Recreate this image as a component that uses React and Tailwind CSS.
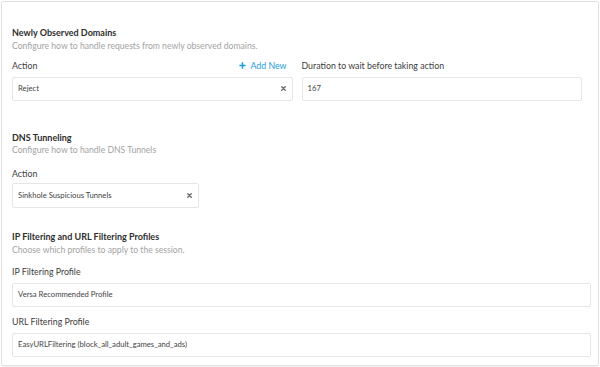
import React from "react";

const font = { fontFamily: "Lato, 'Open Sans', sans-serif" };

function XIcon() {
  return (
    <svg width="5" height="5" viewBox="0 0 10 10" className="shrink-0">
      <path d="M1.5 1.5 L8.5 8.5 M8.5 1.5 L1.5 8.5" stroke="#666" strokeWidth="2.6" strokeLinecap="round" />
    </svg>
  );
}

function Field({ value, clear, className = "" }) {
  return (
    <div className={`h-[24px] flex items-center justify-between border border-[#e6e6e6] rounded-[2px] bg-white pl-[5px] pr-[6px] ${className}`}>
      <span className="text-[7.7px] text-[#444] leading-none">{value}</span>
      {clear && <XIcon />}
    </div>
  );
}

function Title({ children }) {
  return <div className="text-[9px] leading-[12px] font-bold text-[#2e2e2e]">{children}</div>;
}
function Sub({ children }) {
  return <div className="text-[8.65px] leading-[12px] text-[#a3a3a3] mt-[0.5px]">{children}</div>;
}
function Label({ children, className = "" }) {
  return <div className={`text-[8.8px] leading-[12px] text-[#3c3c3c] ${className}`}>{children}</div>;
}

export default function App() {
  return (
    <div className="w-[600px] h-[367px] bg-white" style={font}>
      <div className="ml-px mt-px w-[598px] h-[365px] border border-[#e2e2e2] rounded-[2px] shadow-[0_1px_1px_rgba(0,0,0,0.06)] pl-[10px] pr-[7px] pt-[25px]">
        {/* Section 1 */}
        <Title>Newly Observed Domains</Title>
        <Sub>Configure how to handle requests from newly observed domains.</Sub>
        <div className="grid grid-cols-2 mt-[8px]">
          <div className="pr-[9px]">
            <div className="flex items-center justify-between">
              <Label>Action</Label>
              <div className="flex items-center gap-[4px] mr-[6px] text-[8.8px] leading-[12px] text-[#1d9ce0]">
                <svg width="7" height="7" viewBox="0 0 10 10">
                  <path d="M5 0.5 V9.5 M0.5 5 H9.5" stroke="#1d9ce0" strokeWidth="2.2" />
                </svg>
                <span>Add New</span>
              </div>
            </div>
            <Field value="Reject" clear className="mt-[5px]" />
          </div>
          <div className="pr-[9px]">
            <Label>Duration to wait before taking action</Label>
            <Field value="167" className="mt-[5px]" />
          </div>
        </div>

        {/* Section 2 */}
        <div className="mt-[31px]">
          <Title>DNS Tunneling</Title>
          <Sub>Configure how to handle DNS Tunnels</Sub>
          <Label className="mt-[12px]">Action</Label>
          <Field value="Sinkhole Suspicious Tunnels" clear className="mt-[3px] w-[187px] h-[25px]" />
        </div>

        {/* Section 3 */}
        <div className="mt-[23px]">
          <Title>IP Filtering and URL Filtering Profiles</Title>
          <Sub>Choose which profiles to apply to the session.</Sub>
          <Label className="mt-[10px]">IP Filtering Profile</Label>
          <Field value="Versa Recommended Profile" className="mt-[5px]" />
          <Label className="mt-[9px]">URL Filtering Profile</Label>
          <Field value="EasyURLFiltering (block_all_adult_games_and_ads)" className="mt-[5px]" />
        </div>
      </div>
    </div>
  );
}
